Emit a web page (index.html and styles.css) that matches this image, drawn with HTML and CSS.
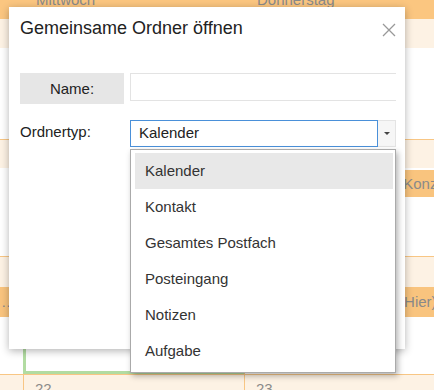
FILE: index.html
```html
<!DOCTYPE html>
<html lang="de">
<head>
<meta charset="UTF-8">
<meta name="viewport" content="width=device-width, initial-scale=1.0">
<title>Gemeinsame Ordner öffnen</title>
<link rel="stylesheet" href="styles.css">
</head>
<body>
<div id="calendar">
  <div class="cal-head">
    <div></div>
    <div class="day-name">Mittwoch</div>
    <div class="day-name">Donnerstag</div>
  </div>
  <div class="allday"></div>
  <div class="week-rest"></div>

  <div class="week week-a">
    <div class="day"><div class="date"></div></div>
    <div class="day"><div class="date">8</div></div>
    <div class="day"><div class="date">9</div><div class="event">Generalproben für das Konzert</div></div>
  </div>

  <div class="week week-b">
    <div class="day"><div class="date"></div><div class="event">…</div></div>
    <div class="day today"><div class="date">15</div><div class="event">Kundentermin</div></div>
    <div class="day"><div class="date">16</div><div class="event">Kundentermin (Büro 2, Hier)</div></div>
  </div>

  <div class="week week-c">
    <div class="day"><div class="date"></div></div>
    <div class="day"><div class="date">22</div></div>
    <div class="day"><div class="date">23</div></div>
  </div>
</div>

<div id="dialog">
  <div class="dialog-head">
    <h2>Gemeinsame Ordner öffnen</h2>
    <button class="close" title="Schließen">
      <svg width="14" height="14" viewBox="0 0 14 14"><path d="M1 1L13 13M13 1L1 13" stroke="#999" stroke-width="1.3" fill="none"/></svg>
    </button>
  </div>
  <div class="form-row">
    <label class="label-box">Name:</label>
    <div class="name-field"><input type="text"></div>
  </div>
  <div class="form-row">
    <label class="label-plain">Ordnertyp:</label>
    <div class="select">
      <span class="select-value">Kalender</span>
      <span class="select-arrow"></span>
    </div>
  </div>
</div>

<ul id="dropdown">
  <li class="active">Kalender</li>
  <li>Kontakt</li>
  <li>Gesamtes Postfach</li>
  <li>Posteingang</li>
  <li>Notizen</li>
  <li>Aufgabe</li>
</ul>
</body>
</html>
```

FILE: styles.css
```css
* {
    box-sizing: border-box;
}
body {
    margin: 0;
    font-family: "Liberation Sans", Arial, sans-serif;
    background-color: #fff;
    overflow: hidden;
}

/* calendar behind the dialog */
#calendar {
    width: 434px;
    height: 390px;
    overflow: hidden;
    color: #8a8a8a;
    font-size: 15px;
}
.cal-head {
    display: grid;
    grid-template-columns: 23px 221px 222px;
    height: 19px;
    background-color: #fbc680;
    overflow: hidden;
}
.day-name {
    margin-top: -6px;
    padding-left: 13px;
    line-height: 12px;
    white-space: nowrap;
}
.allday {
    height: 29px;
    background-color: #fdf2e4;
}
.week-rest {
    height: 91px;
}
.week {
    display: grid;
    grid-template-columns: 23px 221px 222px;
    border-top: 1px solid #f8c684;
}
.week-a { height: 117px; }
.week-b { height: 118px; }
.week-c { height: 40px; background-color: #fdf2e4; }
.day {
    border-left: 1px solid #f8c684;
    overflow: hidden;
}
.day:first-child {
    border-left: none;
}
.date {
    height: 28px;
    padding: 4px 0 0 11px;
    line-height: 20px;
    background-color: #fdf2e4;
}
.week-b .date {
    height: 30px;
}
.event {
    margin-top: 2px;
    height: 27px;
    padding: 0 4px;
    line-height: 27px;
    background-color: #f9c47e;
    white-space: nowrap;
}
.week-b .event {
    margin-top: 0;
    height: 30px;
    line-height: 30px;
}
.week-b .day:first-child .event {
    padding: 0 1px;
}
.today {
    border: 3px solid #b2dca2;
}

/* dialog */
#dialog {
    position: absolute;
    left: 9px;
    top: 7px;
    width: 396px;
    height: 342px;
    background-color: #fff;
    box-shadow: 0 2px 8px rgba(0, 0, 0, 0.3);
}
.dialog-head {
    display: flex;
    justify-content: space-between;
    align-items: center;
    padding: 9px 9px 0 11px;
}
.dialog-head h2 {
    margin: 0;
    font-size: 18px;
    font-weight: normal;
    line-height: 24px;
    color: #222;
}
.close {
    margin-top: 3px;
    padding: 0;
    border: none;
    background: none;
    width: 14px;
    height: 14px;
    cursor: pointer;
}
.close svg {
    display: block;
}
.form-row {
    display: flex;
    padding: 0 9px 0 11px;
    margin-top: 33px;
    font-size: 15px;
    color: #222;
}
.form-row + .form-row {
    margin-top: 16px;
}
.label-box {
    width: 104px;
    height: 31px;
    line-height: 31px;
    text-align: center;
    background-color: #e6e6e6;
}
.label-plain {
    width: 104px;
    padding-top: 3px;
    line-height: 18px;
}
.name-field {
    flex: 1;
    margin-left: 6px;
    height: 28px;
    overflow: hidden;
}
.name-field input {
    width: calc(100% + 2px);
    height: 28px;
    border: 1px solid #e3e3e3;
    outline: none;
}
.select {
    flex: 1;
    display: flex;
    margin-left: 6px;
    height: 27px;
}
.select-value {
    flex: 1;
    border: 1px solid #4a90d9;
    padding-left: 8px;
    line-height: 24px;
}
.select-arrow {
    width: 18px;
    display: flex;
    align-items: center;
    justify-content: center;
    border: 1px solid #e4e4e4;
    border-left: none;
    background-color: #f6f6f6;
}
.select-arrow::after {
    content: "";
    border-left: 3px solid transparent;
    border-right: 3px solid transparent;
    border-top: 3px solid #444;
}

/* open select list */
#dropdown {
    position: absolute;
    left: 130px;
    top: 149px;
    width: 266px;
    height: 224px;
    margin: 0;
    padding: 3px 2px 3px 4px;
    list-style: none;
    background-color: #fff;
    border: 1px solid #aaa;
    box-shadow: 2px 3px 6px rgba(0, 0, 0, 0.3);
    font-size: 15px;
    color: #333;
}
#dropdown li {
    height: 36px;
    line-height: 36px;
    padding-left: 10px;
}
#dropdown li.active {
    background-color: #e8e8e8;
}
```
